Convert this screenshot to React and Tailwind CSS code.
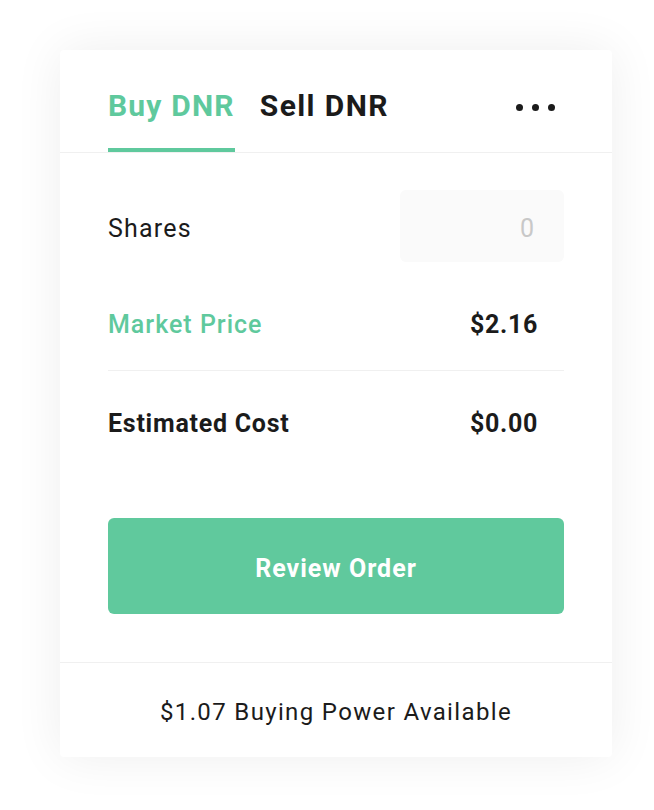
import React, { useState } from "react";

const font = { fontFamily: "Roboto, 'Liberation Sans', sans-serif" };

// order ticket card
export default function App() {
  const [tab, setTab] = useState("buy");
  const [shares, setShares] = useState("");

  return (
    <div className="min-h-[810px] w-full bg-white pt-[50px]" style={font}>
      <div className="ml-[60px] w-[552px] rounded-[4px] bg-white shadow-[0_0_50px_rgba(0,0,0,0.07)]">
        {/* tabs */}
        <div className="flex border-b border-[#f0f0f0] px-12 pt-[38px]">
          <button onClick={() => setTab("buy")} className="flex flex-col items-stretch">
            <span
              className={`text-[30px] font-bold leading-[36px] tracking-[1.2px] ${
                tab === "buy" ? "text-[#5fc99d]" : "text-[#1b1b1b]"
              }`}
            >
              Buy DNR
            </span>
            <span className={`mt-[24px] h-1 ${tab === "buy" ? "bg-[#5fc99d]" : "bg-transparent"}`} />
          </button>
          <button onClick={() => setTab("sell")} className="ml-[25px] flex flex-col items-stretch">
            <span
              className={`text-[30px] font-bold leading-[36px] tracking-[1.4px] ${
                tab === "sell" ? "text-[#5fc99d]" : "text-[#1b1b1b]"
              }`}
            >
              Sell DNR
            </span>
            <span className={`mt-[24px] h-1 ${tab === "sell" ? "bg-[#5fc99d]" : "bg-transparent"}`} />
          </button>
          <div className="ml-auto mr-[9px] flex h-[38px] items-center gap-[9px]">
            <span className="h-[7px] w-[7px] rounded-full bg-[#1b1b1b]" />
            <span className="h-[7px] w-[7px] rounded-full bg-[#1b1b1b]" />
            <span className="h-[7px] w-[7px] rounded-full bg-[#1b1b1b]" />
          </div>
        </div>

        {/* body */}
        <div className="px-12 pt-[37px]">
          <div className="flex h-[72px] items-center justify-between">
            <span className="pt-[6px] text-[25px] tracking-[1.2px] text-[#1b1b1b]">Shares</span>
            <input
              value={shares}
              onChange={(e) => setShares(e.target.value)}
              placeholder="0"
              className="h-[72px] w-[164px] rounded-[6px] bg-[#fafafa] pr-[30px] pt-[4px] text-right text-[25px] text-[#1b1b1b] outline-none placeholder:text-[#c8c8c8]"
            />
          </div>

          <div className="mt-[18px] flex h-[91px] items-center justify-between border-b border-[#f0f0f0] pr-[26px]">
            <span className="text-[25px] font-medium tracking-[1px] text-[#5fc99d]">Market Price</span>
            <span className="text-[25px] font-bold tracking-[0.7px] text-[#1b1b1b]">$2.16</span>
          </div>

          <div className="flex h-[104px] items-center justify-between pr-[26px] pt-[2px]">
            <span className="text-[25px] font-bold tracking-[0.75px] text-[#1b1b1b]">Estimated Cost</span>
            <span className="text-[25px] font-bold tracking-[0.7px] text-[#1b1b1b]">$0.00</span>
          </div>

          <button className="mt-[43px] flex h-[96px] w-full items-center justify-center rounded-[6px] bg-[#60c99d] pt-[5px] text-[25px] font-bold tracking-[1px] text-white">
            Review Order
          </button>
        </div>

        {/* footer */}
        <div className="mt-[48px] flex h-[95px] items-center justify-center border-t border-[#f0f0f0] pt-[4px] text-[24px] tracking-[1.35px] text-[#1b1b1b]">
          $1.07 Buying Power Available
        </div>
      </div>
    </div>
  );
}
